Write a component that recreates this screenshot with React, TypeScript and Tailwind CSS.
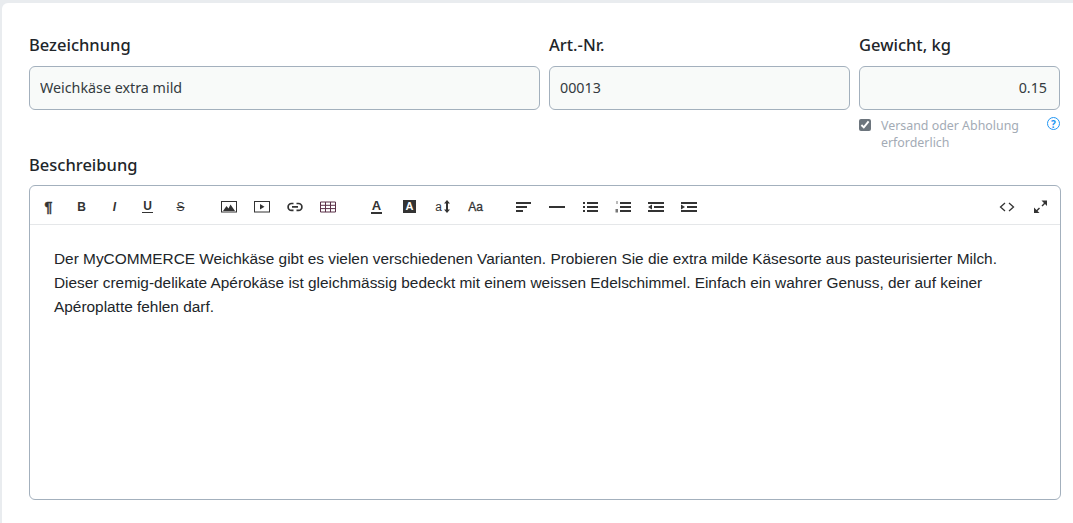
import type { ReactNode } from "react";

const uiFont = { fontFamily: '"Noto Sans", "Open Sans", sans-serif' };

function Tool({ children }: { children: ReactNode }) {
  return (
    <button
      type="button"
      className="flex h-[33px] w-[33px] items-center justify-center text-[#333]"
    >
      {children}
    </button>
  );
}

function Icon({ children }: { children: ReactNode }) {
  return (
    <svg width="16" height="14" viewBox="0 0 16 14" fill="#333">
      {children}
    </svg>
  );
}

function Letter({ children, className = "" }: { children: ReactNode; className?: string }) {
  return (
    <span
      className={`text-[12px] font-bold leading-none text-[#333] ${className}`}
      style={{ fontFamily: '"Liberation Sans", sans-serif' }}
    >
      {children}
    </span>
  );
}

function Lines({ x = 0 }: { x?: number }) {
  const w = 16 - x;
  return (
    <>
      <rect x={x} y="2" width={w} height="2" />
      <rect x={x} y="6" width={w} height="2" />
      <rect x={x} y="10" width={w} height="2" />
    </>
  );
}

function Toolbar() {
  return (
    <div className="flex h-[39px] items-center border-b border-[#e5e7e9] pl-[2px] pr-[4px] pt-[3px]">
      <div className="flex items-center">
        <Tool>
          <Letter className="text-[14px] [-webkit-text-stroke:0.4px_#333]">¶</Letter>
        </Tool>
        <Tool>
          <Letter>B</Letter>
        </Tool>
        <Tool>
          <Letter className="italic">I</Letter>
        </Tool>
        <Tool>
          <Letter className="border-b border-[#333] px-[1px]">U</Letter>
        </Tool>
        <Tool>
          <Letter className="font-normal line-through">S</Letter>
        </Tool>
      </div>
      <div className="ml-[15px] flex items-center">
        <Tool>
          <Icon>
            <rect x="0.5" y="1.5" width="15" height="10.5" fill="none" stroke="#333" />
            <path d="M2 11l3.500-5 2 2.500 2-4 4.500 6.500z" />
          </Icon>
        </Tool>
        <Tool>
          <Icon>
            <rect x="0.5" y="1.5" width="15" height="10.5" fill="none" stroke="#333" />
            <path d="M6 4l4.500 2.800L6 9.500z" />
          </Icon>
        </Tool>
        <Tool>
          <Icon>
            <path
              d="M6.500 3.500H4.500a3.300 3.300 0 0 0 0 6.800h2M9.500 3.500h2a3.300 3.300 0 0 1 0 6.800h-2M5 6.900h6"
              fill="none"
              stroke="#333"
              strokeWidth="1.700"
            />
          </Icon>
        </Tool>
        <Tool>
          <Icon>
            <path
              d="M.5 2h15v10H.5zM.5 5.300h15M.5 8.600h15M5.500 2v10M10.500 2v10"
              fill="none"
              stroke="#5a3048"
            />
          </Icon>
        </Tool>
      </div>
      <div className="ml-[16px] flex items-center">
        <Tool>
          <Letter className="border-b-2 border-[#333] px-[1px] text-[13px]">A</Letter>
        </Tool>
        <Tool>
          <span
            className="flex h-[13px] w-[13px] items-center justify-center bg-[#333] text-[11px] font-bold text-white"
            style={{ fontFamily: '"Liberation Sans", sans-serif' }}
          >
            A
          </span>
        </Tool>
        <Tool>
          <span className="flex items-center gap-[2px]">
            <Letter className="font-normal">a</Letter>
            <svg width="6" height="13" viewBox="0 0 6 13" fill="#333">
              <path d="M3 0l3 3.500H4v6h2L3 13 0 9.500h2v-6H0z" />
            </svg>
          </span>
        </Tool>
        <Tool>
          <Letter className="font-normal [-webkit-text-stroke:0.3px_#333]">Aa</Letter>
        </Tool>
      </div>
      <div className="ml-[15px] flex items-center">
        <Tool>
          <Icon>
            <rect y="2" width="15" height="2" />
            <rect y="6" width="11" height="2" />
            <rect y="10" width="7" height="2" />
          </Icon>
        </Tool>
        <Tool>
          <Icon>
            <rect y="6" width="16" height="2" />
          </Icon>
        </Tool>
        <Tool>
          <Icon>
            <rect x="1" y="2" width="2" height="2" />
            <rect x="1" y="6" width="2" height="2" />
            <rect x="1" y="10" width="2" height="2" />
            <Lines x={5} />
          </Icon>
        </Tool>
        <Tool>
          <Icon>
            <rect x="1.500" y="1" width="1" height="3" fill="#777" />
            <rect x="0.500" y="9" width="2.500" height="3.500" fill="#777" />
            <Lines x={5} />
          </Icon>
        </Tool>
        <Tool>
          <Icon>
            <rect y="2" width="16" height="2" />
            <rect x="6" y="6" width="10" height="2" />
            <rect y="10" width="16" height="2" />
            <path d="M4 4.500v5L0 7z" />
          </Icon>
        </Tool>
        <Tool>
          <Icon>
            <rect y="2" width="16" height="2" />
            <rect x="6" y="6" width="10" height="2" />
            <rect y="10" width="16" height="2" />
            <path d="M0 4.500v5L4 7z" />
          </Icon>
        </Tool>
      </div>
      <div className="ml-auto flex items-center">
        <Tool>
          <Icon>
            <path d="M6 3L1.500 7 6 11M10 3l4.500 4L10 11" fill="none" stroke="#333" strokeWidth="1.300" />
          </Icon>
        </Tool>
        <Tool>
          <Icon>
            <path d="M9.500.500h5.500V6l-2-2-2.500 2.500-1-1L12 3zM2 7.500V13h5.500l-2-2L8 8.500l-1-1L4.500 10z" />
          </Icon>
        </Tool>
      </div>
    </div>
  );
}

function Field({ label, value, right = false }: { label: string; value: string; right?: boolean }) {
  return (
    <div className="flex flex-col">
      <label className="mb-[9px] text-[16.5px] font-medium leading-[24px] text-[#212529]">{label}</label>
      <input
        readOnly
        value={value}
        className={`h-[44px] w-full rounded-[6px] border border-[#a3b0bd] bg-[#f8faf9] px-[10px] pb-[1px] text-[14.300px] text-[#343a40] outline-none ${
          right ? "pr-[12px] text-right" : ""
        }`}
      />
    </div>
  );
}

export default function App() {
  return (
    <div className="h-[523px] overflow-hidden bg-[#e9ecef] pl-[2px] pt-[3px]" style={uiFont}>
      <div className="h-[540px] rounded-tl-[6px] bg-white pl-[27px] pr-[12px] pt-[30px]">
        <div className="grid grid-cols-[511px_301px_201px] gap-x-[9px] gap-y-0">
          <Field label="Bezeichnung" value="Weichkäse extra mild" />
          <Field label="Art.-Nr." value="00013" />
          <Field label="Gewicht, kg" value="0.15" right />
          <div className="col-start-3 mt-[7px] flex items-start">
            <input
              type="checkbox"
              readOnly
              checked
              className="mt-[2px] h-[12px] w-[12px] accent-[#6c757d]"
            />
            <span className="ml-[10px] w-[160px] text-[12.400px] leading-[17px] text-[#a3abb5]">
              Versand oder Abholung erforderlich
            </span>
            <span className="ml-auto flex h-[13px] w-[13px] items-center justify-center rounded-full border-[1.500px] border-[#2196f3] text-[10px] font-bold leading-none text-[#2196f3]">
              ?
            </span>
          </div>
        </div>
        <label className="mt-[2px] block text-[16.500px] font-medium leading-[24px] text-[#212529]">
          Beschreibung
        </label>
        <div className="mt-[8px] h-[315px] w-[1032px] rounded-[6px] border border-[#a3b0bd] bg-white">
          <Toolbar />
          <div
            className="px-[24px] pt-[22px] text-[15.400px] leading-[24px] text-[#212529]"
            style={{ fontFamily: '"Liberation Sans", sans-serif' }}
          >
            Der MyCOMMERCE Weichkäse gibt es vielen verschiedenen Varianten. Probieren Sie die extra milde Käsesorte aus
            pasteurisierter Milch. Dieser cremig-delikate Apérokäse ist gleichmässig bedeckt mit einem weissen
            Edelschimmel. Einfach ein wahrer Genuss, der auf keiner Apéroplatte fehlen darf.
          </div>
        </div>
      </div>
    </div>
  );
}
